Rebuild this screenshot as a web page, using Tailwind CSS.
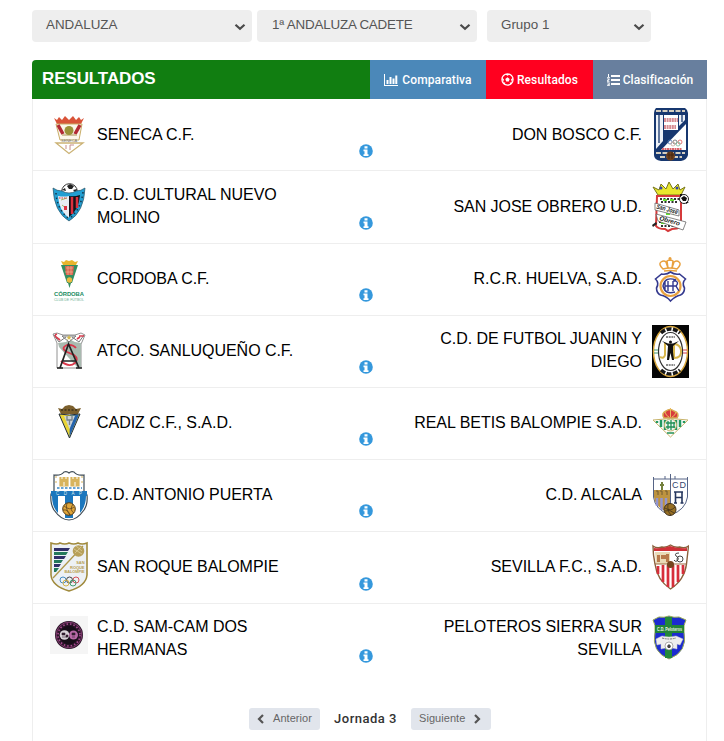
<!DOCTYPE html>
<html lang="es">

<head>
  <meta charset="UTF-8">
  <meta name="viewport" content="width=device-width, initial-scale=1.0">
  <script src="https://cdn.jsdelivr.net/npm/@tailwindcss/browser@4"></script>
  <title>Resultados</title>
</head>

<body class="bg-white font-['Liberation_Sans',Arial,sans-serif] text-black">

  <svg class="hidden">
    <symbol id="info" viewBox="0 0 14 14">
      <circle cx="7" cy="7" r="6.800" fill="#3598dc" />
      <path d="M5.500 2.300h3v2.200h-3zM4.500 5.500h4v4.700h1v1.700h-5v-1.700h1V7.200h-1z" fill="#fff" />
    </symbol>
    <symbol id="chevron" viewBox="0 0 12 8">
      <path d="M1.500 1.700 6 5.800l4.500-4.100" fill="none" stroke="#4a4a4a" stroke-width="2.200" />
    </symbol>
  </svg>

  <!-- filters -->
  <div class="flex pt-[10px] pl-8 text-[13.4px] text-[#555]">
    <div class="mr-[5px] flex h-8 w-[220px] items-center justify-between rounded bg-[#eee] pr-[6px] pb-px pl-[14px]">
      <span>ANDALUZA</span><svg class="mt-[2px] h-2 w-3"><use href="#chevron" /></svg>
    </div>
    <div class="mr-[10px] flex h-8 w-[220px] items-center justify-between rounded bg-[#eee] pr-[6px] pb-px pl-[15px]">
      <span class="tracking-[-0.2px]">1ª ANDALUZA CADETE</span><svg class="mt-[2px] h-2 w-3"><use href="#chevron" /></svg>
    </div>
    <div class="flex h-8 w-[164px] items-center justify-between rounded bg-[#eee] pr-[6px] pb-px pl-[14px]">
      <span>Grupo 1</span><svg class="mt-[2px] h-2 w-3"><use href="#chevron" /></svg>
    </div>
  </div>

  <div class="mt-[18px] ml-8 w-[675px]">
    <!-- title and tabs -->
    <div class="flex h-[39px] rounded-tl bg-[#117e11] text-white">
      <h2 class="flex-1 pl-[10px] text-[17px] leading-[37px] font-bold tracking-[-0.1px]">RESULTADOS</h2>
      <a class="flex w-[116px] items-center justify-center gap-1 bg-[#4b88b9] font-[Roboto] text-[12px] font-medium">
        <svg class="h-3 w-[14px]" viewBox="0 0 14 12" fill="#fff"><path d="M0 0h1v11h13v1H0zM2.500 6h2v4h-2zM5.500 3h2v7h-2zM8.500 4.500h2V10h-2zM11.300 1.500h2V10h-2z" /></svg>
        <span class="tracking-[0.1px]">Comparativa</span>
      </a>
      <a class="flex w-[107px] items-center justify-center gap-[3px] bg-[#ff001f] font-[Roboto] text-[12px] font-medium">
        <svg class="h-[13px] w-[13px]" viewBox="0 0 13 13">
          <circle cx="6.500" cy="6.500" r="5.600" fill="none" stroke="#fff" stroke-width="1.200" />
          <path d="m6.500 4.300 2.200 1.600-.9 2.600H5.200l-.9-2.600zM3.700 1l2.800 1.700L9.300 1zM.7 4.500l2.300 1.700-1 3.200zM12.300 4.500 10 6.200l1 3.200zM3.400 12l1-2.600H1.700zM9.600 12l-1-2.600h2.700z" fill="#fff" />
        </svg>
        <span class="tracking-[0.1px]">Resultados</span>
      </a>
      <a class="flex w-[114px] items-center justify-center gap-[3px] bg-[#687f9e] font-[Roboto] text-[12px] font-medium">
        <svg class="h-3 w-[13px]" viewBox="0 0 13 12" fill="#fff"><path d="M4 1h9v2H4zM4 5h9v2H4zM4 9h9v2H4zM1 0h1v3h1v.8H0V3h1zM0 4.500h2.500v1.500L1 7h1.500v.8H0V6.500L1.500 5.300H0zM0 8.500h2.700V12H0v-.8h1.700v-.5H.5V10h1.200v-.7H0z" /></svg>
        <span class="tracking-[0.1px]">Clasificación</span>
      </a>
    </div>

    <!-- matches -->
    <div class="h-[642px] border-x border-[#eee] text-[16px] leading-[23px] tracking-[-0.04px]">

      <div class="flex h-[72px] items-center border-b border-[#eee] pr-[17px] pl-[17px]">
        <svg class="h-[71px] w-[38px]" viewBox="0 0 38 71">
          <path d="m4 19 3 2 2-3 3 3 3-4 4 4 4-4 3 4 3-3 2 3 3-2-3 6H7z" fill="#d95338" />
          <path d="M6 25h26l-3 16H10z" fill="#fbf6ea" stroke="#c9ad67" />
          <path d="m8 26 5 9M30 26l-5 9" stroke="#b22b35" stroke-width="3.500" />
          <path d="M12 36h15" stroke="#c5b084" stroke-width="1.500" />
          <circle cx="19" cy="31.500" r="4.500" fill="#9a9138" />
          <path d="M6 44h27L19 54.500z" fill="#fff" stroke="#cbb274" stroke-width="1.300" />
          <path d="M16 46v4M20 46v5M20 46h4" stroke="#c78f8b" />
          <text x="11" y="42.500" font-size="4" fill="#777">SENECA</text>
        </svg>
        <div class="ml-[9px] w-[210px] pb-px">SENECA C.F.</div>
        <svg class="mt-[32px] ml-[52px] h-[14px] w-[14px]"><use href="#info" /></svg>
        <div class="ml-auto w-[240px] pb-px text-right">DON BOSCO C.F.</div>
        <svg class="ml-[10px] h-[71px] w-[37px]" viewBox="0 0 37 71">
          <path d="M4 9h29q3 2 3 5v42q-1 5-7 6H9q-7-1-7-6V14q0-3 2-5z" fill="#17376f" />
          <path d="M4 12h29M4 54h29M8 58h22" stroke="#d5cebf" stroke-width="1.800" stroke-dasharray="5 1.500" />
          <path d="M4 16h7v26l-7 8zM27 16h6v5l-6 6z" fill="#eef2f8" />
          <path d="M7 16v28M30 16v7" stroke="#17376f" stroke-width="1.300" />
          <path d="M12 16h14v15H12z" fill="#fff" />
          <path d="M34 25v26H9z" fill="#fff" />
          <path d="M12 21h14M12 28h12" stroke="#d78c92" stroke-width="4" stroke-dasharray="2 .6" />
          <path d="M10 50h20" stroke="#d9646a" stroke-width="2" stroke-dasharray="2 .5" />
          <g fill="none" stroke-width=".8"><circle cx="18" cy="43" r="2" stroke="#527bb5" /><circle cx="23" cy="43" r="2" stroke="#666" /><circle cx="28" cy="43" r="2" stroke="#d55" /><circle cx="21" cy="45" r="2" stroke="#ca9" /><circle cx="26" cy="45" r="2" stroke="#7b9" /></g>
          <circle cx="18.500" cy="57" r="4.500" fill="#70411e" /><path d="M15 56h7M17 53v7M20 53v7" stroke="#36200f" stroke-width=".7" />
        </svg>
      </div>

      <div class="flex h-[73px] items-center border-b border-[#eee] pr-[17px] pl-[17px]">
        <svg class="h-[72px] w-[38px]" viewBox="0 0 38 72">
          <circle cx="19.500" cy="20.500" r="7.800" fill="#fff" stroke="#333" />
          <path d="m17 15 3-2 4 2-2 3h-3zM12 19l3-2 1 3zM27 18l-4 1 3 3z" fill="#222" />
          <path d="M3 17q4 3 9 3 7 4 14 0 5 0 9-3-1 24-16 33Q4 41 3 17z" fill="#229fd2" stroke="#2c5365" stroke-width=".7" />
          <path d="M8 25q6 1 11 0v22Q9 40 8 25z" fill="#e9edf3" />
          <path d="M19 25q5 1 11-1-1 15-11 22z" fill="#151218" />
          <path d="M22 26v17M27 26v11" stroke="#dc303d" stroke-width="2.500" />
          <path d="m11 29 6-2M12 34l5 4" stroke="#a1b96a" /><path d="M14 35h3v4h-3z" fill="#dd3444" />
          <path d="M9 27h8" stroke="#d33" stroke-dasharray="1.500 1" />
          <path d="M6 22q1 16 12 25M33 21q-2 17-13 26" fill="none" stroke="#163549" stroke-width="1.500" stroke-dasharray="1.500 3" />
        </svg>
        <div class="ml-[9px] w-[210px] pb-[3px]">C.D. CULTURAL NUEVO MOLINO</div>
        <svg class="mt-[32px] ml-[52px] h-[14px] w-[14px]"><use href="#info" /></svg>
        <div class="ml-auto w-[240px] pb-px text-right">SAN JOSE OBRERO U.D.</div>
        <svg class="ml-[10px] h-[72px] w-[37px]" viewBox="0 0 37 72">
          <path d="m1 16 6 3 2-6 5 5 3-7 4 7 5-5 2 6 5-3-4 8H6z" fill="#e9e72d" stroke="#77751a" />
          <circle cx="9" cy="17" r="1.500" fill="#3544a8" /><circle cx="25" cy="17" r="1.500" fill="#3544a8" />
          <path d="M5 25h24v31q-4 2-9 2l-4 2-3-2q-7 0-9-3z" fill="#fff" stroke="#d53a3b" stroke-width="2" />
          <path d="M8 28h19M9 31h17M7 51h20M9 55h16" stroke="#333" stroke-width="2" stroke-dasharray="2 1.500" />
          <path d="M11 29h13M9 52h17M14 43h10" stroke="#63e22f" stroke-width="2" stroke-dasharray="4 3" />
          <path d="m3 32 24 7v6L3 39zM4 43l30 8-3 8-25-9z" fill="#fff" stroke="#555" stroke-width=".7" />
          <text x="4" y="37.500" font-size="6.500" font-weight="bold" font-style="italic" textLength="22" lengthAdjust="spacingAndGlyphs" fill="#222" transform="rotate(15 4 37.500)">San José</text>
          <text x="7" y="49" font-size="6.500" font-weight="bold" font-style="italic" textLength="21" lengthAdjust="spacingAndGlyphs" fill="#222" transform="rotate(16 7 49)">Obrero</text>
          <circle cx="32" cy="28" r="4.500" fill="#fff" stroke="#222" /><path d="m29 27 3-2 3 2-1 3h-3zM28 23h3l-3 3zM34 31h3l-3 2z" fill="#111" />
          <path d="m0 54 4-3 1 2-4 3z" fill="#222" />
        </svg>
      </div>

      <div class="flex h-[72px] items-center border-b border-[#eee] pr-[17px] pl-[17px]">
        <svg class="h-[71px] w-[38px]" viewBox="0 0 38 71">
          <path d="m11 17 3 1 2-2 3 1 3-1 3 2 3-1-2 4H13z" fill="#e8b52d" />
          <path d="M11 21h17l-6 18h-5z" fill="#338e63" /><path d="M15 22h9l-1 9h-7z" fill="#db6350" />
          <path d="M16 24h7M15 28h8M18 22v9M21 22v9" stroke="#f3c19c" stroke-width=".6" />
          <circle cx="19.500" cy="36" r="2.700" fill="#e9ba3f" /><path d="M18 39h3l-1.500 5z" fill="#338e63" />
          <text x="4" y="52" font-size="5.800" font-weight="bold" textLength="30" lengthAdjust="spacingAndGlyphs" fill="#218c62">CÓRDOBA</text>
          <text x="4" y="57" font-size="3.600" textLength="30" lengthAdjust="spacingAndGlyphs" fill="#6cb193">CLUB DE FÚTBOL</text>
        </svg>
        <div class="ml-[9px] w-[210px] pb-[3px]">CORDOBA C.F.</div>
        <svg class="mt-[30px] ml-[52px] h-[14px] w-[14px]"><use href="#info" /></svg>
        <div class="ml-auto w-[240px] pb-[3px] text-right">R.C.R. HUELVA, S.A.D.</div>
        <svg class="ml-[10px] h-[71px] w-[37px]" viewBox="0 0 37 71" fill="none">
          <path d="M11 25q-5-5-2-7 3-2 5 0l2 6-1-7q3-2 6 0l-1 7 2-6q3-2 5 0 3 2-2 7-7-2-14 0zM12 27q6-1 13 0M18 13v4M16.500 14.500h3" stroke="#e8a03d" stroke-width="1.500" />
          <path d="M18.500 28q-4 3-9 2l-6 5q4 4 1 9 0 5 4 7 6 1 10 6 5-5 10-6 4-2 4-7-3-5 1-9l-6-5q-5 1-9-2z" stroke="#34398e" stroke-width="1.600" fill="#fff" />
          <circle cx="18.500" cy="42" r="10" stroke="#e8a03d" stroke-width="2.200" />
          <path d="M13 37v10M16 37v10M13 42h12M21 37v10M21 37h3q3 2 0 5l3 5M24 36q-11-4-13 6 2 9 12 6" stroke="#34398e" stroke-width="1.400" />
        </svg>
      </div>

      <div class="flex h-[72px] items-center border-b border-[#eee] pr-[17px] pl-[17px]">
        <svg class="h-[71px] w-[38px]" viewBox="0 0 38 71">
          <path d="m3 18 4-1 6 2h12l6-2 4 2-3 7-1 2v24H7V27z" fill="#fff" stroke="#777" stroke-width=".8" />
          <path d="m8 27 8-1 3-3 6 3 6 1v24h-4L9 31z" fill="#a9bab0" />
          <path d="m4 19 5 7 7-5M34 19l-5 7-7-5M12 20h14l-7 6z" fill="#fff" stroke="#777" />
          <path d="M7 18q-3 1-1 3l4 3M27 23l3-2M29 20l5 0" stroke="#d93d4d" stroke-width="1.600" fill="none" />
          <path d="m19 19 1 2h2l-2 1 1 2-2-1-2 1 1-2-2-1h2z" fill="#d5ba4c" />
          <path d="M26 32q-3-4-9-3-7 3 0 7l7 3q5 4 1 8-6 5-14-2" fill="none" stroke="#d9384b" stroke-width="1.800" />
          <path d="m10 52 8.500-24L29 52M13 45h13M7 52h6M26 52h6" fill="none" stroke="#222" stroke-width="1.700" />
        </svg>
        <div class="ml-[9px] w-[210px] pb-[3px]">ATCO. SANLUQUEÑO C.F.</div>
        <svg class="mt-[30px] ml-[52px] h-[14px] w-[14px]"><use href="#info" /></svg>
        <div class="ml-auto w-[240px] pb-[3px] text-right">C.D. DE FUTBOL JUANIN Y DIEGO</div>
        <svg class="ml-[10px] h-[71px] w-[37px]" viewBox="0 0 37 71">
          <path d="M0 9h37v53H0z" fill="#050505" />
          <ellipse cx="18.500" cy="35.500" rx="17" ry="25" fill="#fff" stroke="#d8a63b" stroke-width="1.500" />
          <path d="M9 17q9-8 19 0M9 54q9 8 19 0" fill="none" stroke="#171717" stroke-width="3.500" stroke-dasharray="5 1.500" />
          <ellipse cx="18.500" cy="35.500" rx="12" ry="19" fill="#fff" stroke="#333" stroke-width="1.200" />
          <path d="M13 27v12q-1 4-5 2M22 28v14q8 0 7-8-1-5-6-6" fill="none" stroke="#d7b64c" stroke-width="2" />
          <circle cx="18.500" cy="26" r="1.500" fill="#111" /><path d="m10 25 6 2.500h5l6-2.500-6 5v6l1 8h-2l-1.500-7-1.500 7h-2l1-14z" fill="#111" />
          <path d="M14 21h9M14 49h9" stroke="#666" stroke-width="1.500" stroke-dasharray="2 .7" />
          <path d="M2 34h4M2 37h4" stroke="#41996a" /><path d="M31 34h4M31 37h4" stroke="#d33f4c" />
        </svg>
      </div>

      <div class="flex h-[72px] items-center border-b border-[#eee] pr-[17px] pl-[17px]">
        <svg class="h-[71px] w-[38px]" viewBox="0 0 38 71">
          <path d="m8 20 4 1 3-3 4-1 4 1 3 3 5-1-3 6H11z" fill="#7c602d" />
          <path d="M11 22h17" stroke="#3d321e" stroke-width="1.500" stroke-dasharray="2 1.500" />
          <path d="M9 26q10 2 21 0L19.500 50z" fill="#e8d435" stroke="#222c3a" />
          <path d="M20 27.500q5 0 9-1L19.500 49z" fill="#2463ad" />
          <path d="M14 28h11l-5.500 13z" fill="#cdd4d6" /><path d="M17 28v4h5v-4M19.500 32v5" stroke="#76828b" stroke-width="1.300" fill="none" />
        </svg>
        <div class="ml-[9px] w-[210px] pb-[3px]">CADIZ C.F., S.A.D.</div>
        <svg class="mt-[30px] ml-[52px] h-[14px] w-[14px]"><use href="#info" /></svg>
        <div class="ml-auto w-[240px] pb-[3px] text-right">REAL BETIS BALOMPIE S.A.D.</div>
        <svg class="ml-[10px] h-[71px] w-[37px]" viewBox="0 0 37 71">
          <path d="M12 30q-3-5 2-7 4-3 8 0 6 2 3 7z" fill="#d83b3d" stroke="#d9ac52" stroke-width="1.500" />
          <path d="M18.500 20v9M13 24q1 4 4 5M24 24q-1 4-4 5" stroke="#e7bd60" fill="none" />
          <path d="M1 32q18-3 35 0L18.500 49z" fill="#fff" stroke="#c7b36a" />
          <path d="M5 33v2M9 32v7M13 32v10M24 32v10M28 32v7M32 33v2" stroke="#229860" stroke-width="2.500" />
          <circle cx="18.500" cy="37" r="6" fill="#eaf5ef" stroke="#c7b36a" />
          <path d="M16 33v8M19 32v10M22 34v6M14 35h9M14 39h9M15 45h7" stroke="#219057" stroke-width="1.300" />
        </svg>
      </div>

      <div class="flex h-[72px] items-center border-b border-[#eee] pr-[17px] pl-[17px]">
        <svg class="h-[71px] w-[38px]" viewBox="0 0 38 71">
          <path d="M4 15q7 1 10-3 3-1 5 1 2-2 5-1 3 4 10 3v16l3 4q1 9-3 15-7 10-15 10T4 50Q0 44 1 34l3-3z" fill="#fff" stroke="#3e4b55" stroke-width="1.200" />
          <path d="M10 17v9h8v-9M21 17v9h8v-9" fill="#d8b45c" stroke="#d8b45c" stroke-width="1.200" />
          <path d="M12 16v3M16 16v3M23 16v3M27 16v3M14 22v4M25 22v4" stroke="#fff" />
          <path d="M6 16v10M32 16v10" stroke="#d8b45c" stroke-dasharray="2 3" />
          <path d="M7 28h25" stroke="#3786c5" stroke-width="1.600" stroke-dasharray="2.500 1.500" />
          <path d="M1 31h36v5H1zM2 36h6v17q-6-6-6-17zM15 36h8v22h-8zM30 36h6q0 10-6 17z" fill="#1c77bd" />
          <text x="6" y="35.300" font-size="4.500" textLength="26" fill="#d9e8ec">CDAP</text>
          <circle cx="19" cy="49" r="6.300" fill="#dfa53a" stroke="#533c1b" />
          <path d="M14 46q6 5 10 1M17 43q-2 6 3 12M23 44q-4 6 1 9M13 50q5-1 7 5" stroke="#533c1b" stroke-width=".7" fill="none" />
        </svg>
        <div class="ml-[9px] w-[210px] pb-[3px]">C.D. ANTONIO PUERTA</div>
        <svg class="mt-[30px] ml-[52px] h-[14px] w-[14px]"><use href="#info" /></svg>
        <div class="ml-auto w-[240px] pb-[3px] text-right">C.D. ALCALA</div>
        <svg class="ml-[10px] h-[71px] w-[37px]" viewBox="0 0 37 71">
          <path d="M1.500 19h34v18q-2 13-17 18Q3 50 1.500 37z" fill="#fff" stroke="#566486" />
          <path d="M18.500 14v40M13 16v3M23 16v3M1.500 17v3M35.500 17v3" stroke="#566486" />
          <path d="M2 30h16v23Q3 48 2 37z" fill="#bd9340" />
          <path d="M4 31h2v4M8 31h2v4M13 31h2v4" stroke="#715a31" fill="none" />
          <path d="M5 38v8M9.500 38v12M14 38v14" stroke="#9395d0" stroke-width="2.500" />
          <path d="M10 22v8M8 25h4" stroke="#74813d" stroke-width="2" />
          <text x="20" y="28" font-size="9" textLength="14" fill="#34466f">CD</text>
          <path d="M23.500 43V32H30v11M22 43h3M28.500 43h3M23.500 37.500H30M22 32h9" stroke="#26375f" stroke-width="1.600" fill="none" />
          <circle cx="18" cy="49.500" r="6" fill="#987025" stroke="#40321d" /><path d="M13 48q6 4 10-1M16 44q-1 7 3 11M13 51q5-2 9 2" stroke="#40321d" stroke-width=".8" fill="none" />
        </svg>
      </div>

      <div class="flex h-[72px] items-center border-b border-[#eee] pr-[17px] pl-[17px]">
        <svg class="h-[71px] w-[38px]" viewBox="0 0 38 71">
          <path d="M1 11q6 2 9 0 5 2 9 0 5 2 9 0 4 2 9 0v32q-1 11-18 16Q2 54 1 43z" fill="#edf1f5" stroke="#a08a3c" stroke-width="1.600" />
          <path d="M4 16h16l-2 3H4zM4 24h12l-2 3H4zM4 32h7l-2 3H4z" fill="#302f68" />
          <path d="M4 20h14l-2 3H4zM4 28h9l-2 3H4zM4 36h5l-3 4H4z" fill="#24795b" />
          <path d="M3 46 33 14" stroke="#ad974b" stroke-width="1.200" /><circle cx="28.500" cy="19" r="5.800" fill="#b7a05a" />
          <path d="m24 17 8 5M26 14l6 5M25 21l6-6" stroke="#e0d1a0" stroke-width=".7" />
          <g font-size="4" font-weight="bold" fill="#b89f52" text-anchor="end"><text x="34.500" y="32">SAN</text><text x="34.500" y="36.500">ROQUE</text><text x="34.500" y="41" textLength="20" lengthAdjust="spacingAndGlyphs">BALOMPIE</text></g>
          <g fill="none"><circle cx="13" cy="48" r="3" stroke="#468cc2" /><circle cx="19.500" cy="48" r="3" stroke="#444" /><circle cx="26" cy="48" r="3" stroke="#d65159" /><circle cx="16" cy="51" r="3" stroke="#d5b44d" /><circle cx="23" cy="51" r="3" stroke="#449b71" /></g>
        </svg>
        <div class="ml-[9px] w-[210px] pb-[3px]">SAN ROQUE BALOMPIE</div>
        <svg class="mt-[32px] ml-[52px] h-[14px] w-[14px]"><use href="#info" /></svg>
        <div class="ml-auto w-[240px] pb-[3px] text-right">SEVILLA F.C., S.A.D.</div>
        <svg class="ml-[10px] h-[71px] w-[37px]" viewBox="0 0 37 71">
          <path d="M1 14q4 3 9 1 4 1 8.500-2 4 3 9 2 5 2 9-1-1 9-2 18-2 16-16 25Q5 48 3 32 1 23 1 14z" fill="#fff" stroke="#8b603c" stroke-width="1.400" />
          <path d="M2 16q8 1 16-2 9 3 17 2v3H2z" fill="#ce3037" />
          <path d="M6 34v8M11 33v17M16 33v22M21 33v22M26 33v17M31 33v9" stroke="#d72e3b" stroke-width="2.700" />
          <path d="M3 20h15v12H4z" fill="#eadbb7" /><path d="M5 23h3v7H5zM14 22h3v8h-3zM9 23h5v4H9z" fill="#b87a4b" /><path d="M3 32h31" stroke="#9d6b43" />
          <path d="M27 21q-5 0-3 3 4 2 1 5-2 1-3-1" stroke="#444" fill="none" /><circle cx="28" cy="27" r="3" stroke="#444" fill="none" />
          <circle cx="18.500" cy="32.500" r="3.500" fill="#75441f" />
        </svg>
      </div>

      <div class="flex h-[72px] items-center pr-[17px] pl-[17px]">
        <svg class="h-[72px] w-[38px]" viewBox="0 0 38 72">
          <path d="M0 12h38v38H0z" fill="#f5f5f5" />
          <circle cx="19" cy="31" r="14" fill="#2a1528" />
          <circle cx="19" cy="31" r="12.800" fill="none" stroke="#96447f" stroke-width=".8" />
          <circle cx="19" cy="31" r="11" fill="none" stroke="#a94b91" stroke-width="1.600" stroke-dasharray="1.500 2" />
          <circle cx="19" cy="31" r="9.300" fill="#170e18" />
          <circle cx="14.500" cy="31" r="4.800" fill="#d9d3d8" /><circle cx="23.500" cy="31" r="4.500" fill="#b768a5" />
          <path d="M12 29h3v2h-3zM16 31h2v2h-2zM12 33h5M22 29h3v2h-3zM22 33h3" fill="#33202f" stroke="#33202f" stroke-width=".6" />
        </svg>
        <div class="ml-[9px] w-[210px] pb-[4px]">C.D. SAM-CAM DOS HERMANAS</div>
        <svg class="mt-[32px] ml-[52px] h-[14px] w-[14px]"><use href="#info" /></svg>
        <div class="ml-auto w-[240px] pb-[4px] text-right">PELOTEROS SIERRA SUR SEVILLA</div>
        <svg class="ml-[10px] h-[72px] w-[37px]" viewBox="0 0 37 72">
          <path d="m1 16 6-3q5 1 10-1 5 2 10 1l7 3q-3 5-2 12 4 20-15 27Q-1 48 3 28q1-7-2-12z" fill="#1c2bd0" stroke="#96a955" />
          <path d="M13 13h7v41h-7z" fill="#22883b" />
          <path d="M3 21h29v8H3z" fill="#238438" /><text x="5" y="27" font-size="5" font-weight="bold" textLength="25" lengthAdjust="spacingAndGlyphs" fill="#f0f5e9">C.D. Peloteros</text>
          <path d="m4 35 6-3q7 2 14 0l7 3-3 6-3-1v5q-8-3-16 0v-5l-4 1z" fill="#eee" stroke="#ccc" stroke-width=".5" />
          <path d="M10 34q7 2 14 0" stroke="#777" fill="none" stroke-dasharray="2 .7" />
          <circle cx="17" cy="42" r="4" fill="#fff" stroke="#777" stroke-width=".6" /><path d="m17 40 2 2-1 2h-2l-1-2z" fill="#444" />
        </svg>
      </div>

      <!-- pager -->
      <div class="mt-[32px] ml-[216px] flex h-[22px] items-center text-[11px] tracking-[0.05px] text-[#666]">
        <a class="flex h-[22px] w-[71px] items-center rounded-[3px] bg-[#e1e5ec] pb-px pl-2">
          <svg class="mr-[9px] h-[10px] w-[7px]" viewBox="0 0 7 10"><path d="M6 1 2 5l4 4" fill="none" stroke="#555" stroke-width="2.200" /></svg>Anterior
        </a>
        <span class="w-[91px] pb-px text-center font-[Roboto] text-[13px] font-medium tracking-[0.5px] text-[#333]">Jornada 3</span>
        <a class="flex h-[22px] w-[80px] items-center rounded-[3px] bg-[#e1e5ec] pb-px pl-2">
          Siguiente<svg class="ml-[9px] h-[10px] w-[7px]" viewBox="0 0 7 10"><path d="m1 1 4 4-4 4" fill="none" stroke="#555" stroke-width="2.200" /></svg>
        </a>
      </div>
    </div>
  </div>

</body>

</html>
